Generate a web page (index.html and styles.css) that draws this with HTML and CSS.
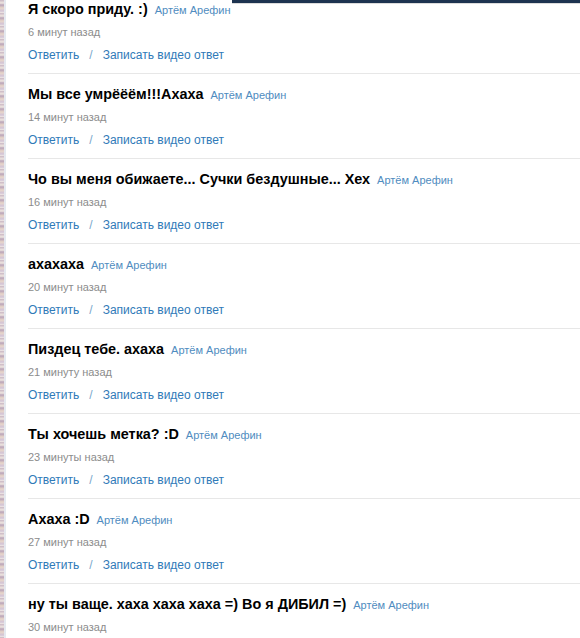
FILE: index.html
```html
<!DOCTYPE html>
<html lang="ru">

<head>
    <meta charset="UTF-8">
    <title>Комментарии</title>
    <link rel="stylesheet" href="styles.css">
</head>

<body>
    <div class="kraj"></div>
    <div class="shapka"></div>

    <div class="spisok">
        <div class="koment">
            <div class="zagolovok"><b>Я скоро приду. :)</b> <a class="avtor" href="#">Артём Арефин</a></div>
            <div class="vremya">6 минут назад</div>
            <div class="dejstviya"><a href="#">Ответить</a><span class="razd">/</span><a href="#">Записать видео ответ</a></div>
        </div>
        <div class="koment">
            <div class="zagolovok"><b>Мы все умрёёём!!!Ахаха</b> <a class="avtor" href="#">Артём Арефин</a></div>
            <div class="vremya">14 минут назад</div>
            <div class="dejstviya"><a href="#">Ответить</a><span class="razd">/</span><a href="#">Записать видео ответ</a></div>
        </div>
        <div class="koment">
            <div class="zagolovok"><b>Чо вы меня обижаете... Сучки бездушные... Хех</b> <a class="avtor" href="#">Артём Арефин</a></div>
            <div class="vremya">16 минут назад</div>
            <div class="dejstviya"><a href="#">Ответить</a><span class="razd">/</span><a href="#">Записать видео ответ</a></div>
        </div>
        <div class="koment">
            <div class="zagolovok"><b>ахахаха</b> <a class="avtor" href="#">Артём Арефин</a></div>
            <div class="vremya">20 минут назад</div>
            <div class="dejstviya"><a href="#">Ответить</a><span class="razd">/</span><a href="#">Записать видео ответ</a></div>
        </div>
        <div class="koment">
            <div class="zagolovok"><b>Пиздец тебе. ахаха</b> <a class="avtor" href="#">Артём Арефин</a></div>
            <div class="vremya">21 минуту назад</div>
            <div class="dejstviya"><a href="#">Ответить</a><span class="razd">/</span><a href="#">Записать видео ответ</a></div>
        </div>
        <div class="koment">
            <div class="zagolovok"><b>Ты хочешь метка? :D</b> <a class="avtor" href="#">Артём Арефин</a></div>
            <div class="vremya">23 минуты назад</div>
            <div class="dejstviya"><a href="#">Ответить</a><span class="razd">/</span><a href="#">Записать видео ответ</a></div>
        </div>
        <div class="koment">
            <div class="zagolovok"><b>Ахаха :D</b> <a class="avtor" href="#">Артём Арефин</a></div>
            <div class="vremya">27 минут назад</div>
            <div class="dejstviya"><a href="#">Ответить</a><span class="razd">/</span><a href="#">Записать видео ответ</a></div>
        </div>
        <div class="koment">
            <div class="zagolovok"><b>ну ты ваще. хаха хаха хаха =) Во я ДИБИЛ =)</b> <a class="avtor" href="#">Артём Арефин</a></div>
            <div class="vremya">30 минут назад</div>
            <div class="dejstviya"><a href="#">Ответить</a><span class="razd">/</span><a href="#">Записать видео ответ</a></div>
        </div>
    </div>
</body>

</html>
```

FILE: styles.css
```css
html,
body {
    margin: 0;
    height: 100%;
    overflow: hidden;
}

body {
    font-family: 'Liberation Sans', Arial, sans-serif;
    background-color: #ffffff;
    position: relative;
}

/* полоска обоев слева */
.kraj {
    position: absolute;
    left: 0;
    top: 0;
    bottom: 0;
    width: 4px;
    border-right: 2px solid #e4e8ef;
    background:
        repeating-linear-gradient(180deg, #c9b7c4 0, #efe6e0 3px, #b9a3b8 5px, #e8d6c9 8px, #d2c3d6 11px, #f1e9e4 13px),
        #d9ccd6;
}

/* кусок верхней панели */
.shapka {
    position: absolute;
    top: 0;
    left: 232px;
    right: 0;
    height: 3px;
    background-color: #1d3350;
    border-bottom: 1px solid #dcdcdc;
}

.spisok {
    margin-top: -11px;
    padding-left: 28px;
}

.koment {
    padding: 11px 0 10px;
    border-bottom: 1px solid #e7e7e7;
}

.zagolovok {
    font-size: 14.4px;
    line-height: 18px;
    height: 18px;
    color: #000000;
    white-space: nowrap;
}

.zagolovok b {
    font-weight: bold;
}

.avtor {
    font-size: 11px;
    line-height: 14px;
    color: #4f8cc0;
    text-decoration: none;
    margin-left: 3px;
}

.vremya {
    margin-top: 6px;
    font-size: 11px;
    line-height: 16px;
    color: #8c8c8c;
}

.dejstviya {
    margin-top: 7px;
    font-size: 12px;
    line-height: 16px;
    color: #2f7ab8;
}

.dejstviya a {
    color: #2f7ab8;
    text-decoration: none;
}

.razd {
    margin: 0 10px;
    color: #7aa6cc;
}
```
